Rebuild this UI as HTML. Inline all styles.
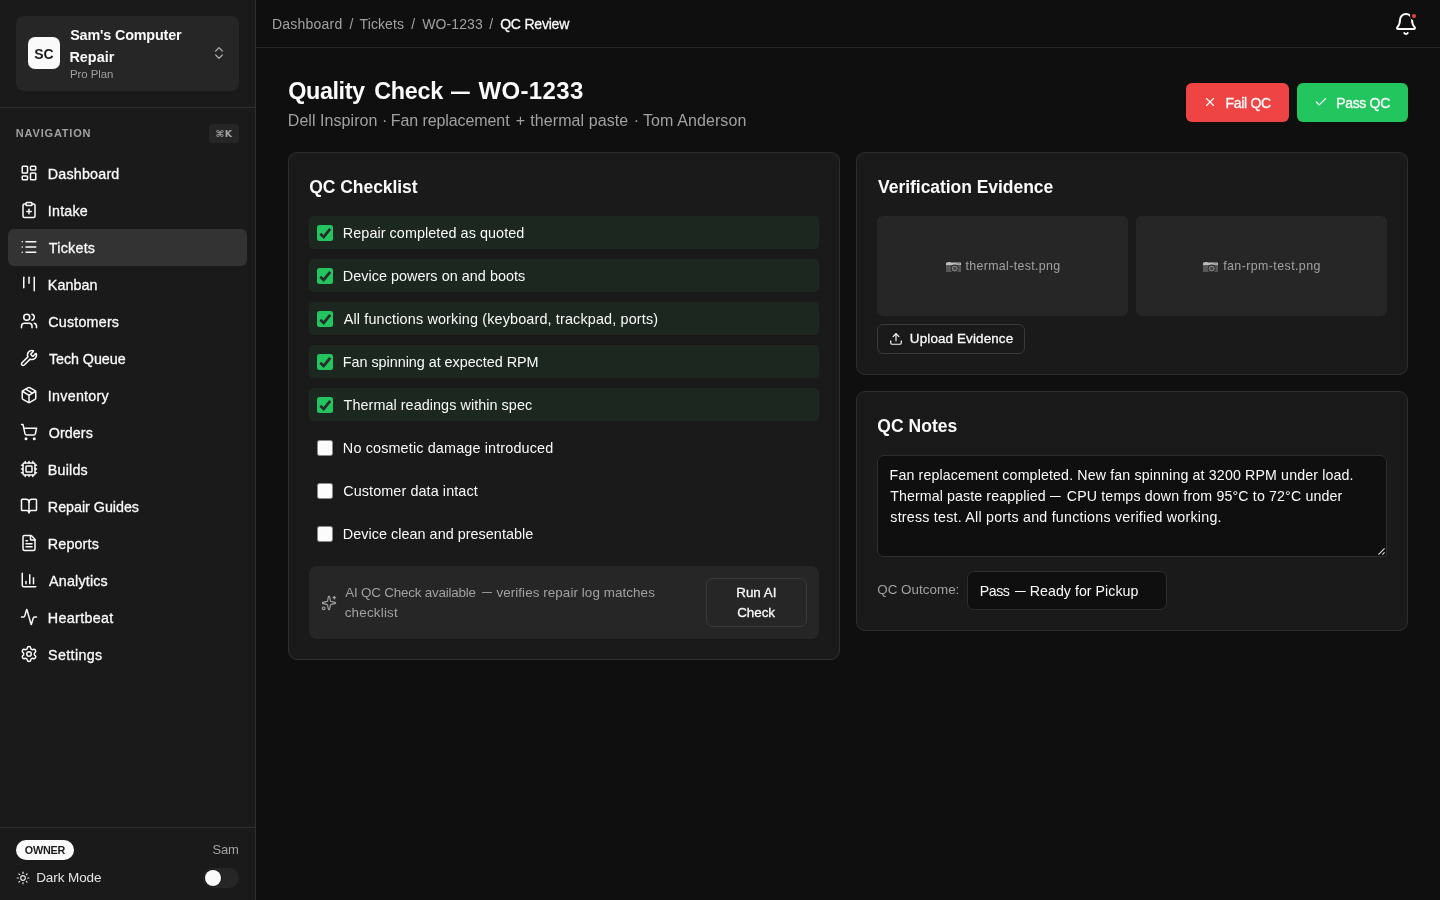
<!DOCTYPE html>
<html lang="en">
<head>
<meta charset="utf-8">
<title>Quality Check — WO-1233</title>
<style>
*{box-sizing:border-box;margin:0;padding:0}
html,body{width:1440px;height:900px;overflow:hidden;background:#0f0f0f;color:#fafafa;
  font-family:"Liberation Sans",sans-serif;font-size:14px}
svg{display:block;fill:none;stroke:currentColor;stroke-width:2;stroke-linecap:round;stroke-linejoin:round}
.abs{position:absolute}
.t{position:absolute;white-space:nowrap;line-height:1}

/* sidebar */
#sb{position:absolute;left:0;top:0;width:256px;height:900px;background:#1a1a1a;border-right:1px solid #2e2e2e}
#brand{position:absolute;left:16px;top:16px;width:223px;height:75px;background:#262626;border-radius:8px}
#logo{position:absolute;left:12px;top:21px;width:32px;height:32px;border-radius:7px;background:#fafafa;color:#1a1a1a;
  font-weight:700;font-size:14px;text-align:center;line-height:34px;letter-spacing:0}
.sep{position:absolute;left:0;width:255px;height:1px;background:#2e2e2e}
.nav{position:absolute;left:8px;width:239px;height:37px;border-radius:6px;color:#fafafa}
.nav svg{position:absolute;left:12px;top:9px;width:18px;height:18px}
.nav span{-webkit-text-stroke:0.3px currentColor;position:absolute;left:40px;top:1px;line-height:37px;font-size:14.3px;white-space:nowrap}
.nav.on{background:#333333}

/* header */
#hd{position:absolute;left:256px;top:0;width:1184px;height:48px;border-bottom:1px solid #262626;background:#0f0f0f}
.bc{position:absolute;top:0;line-height:49px;font-size:14px;color:#a1a1a1;white-space:nowrap}

/* main */
.card{position:absolute;background:#1a1a1a;border:1px solid #2e2e2e;border-radius:9px}
.ct{position:absolute;left:20px;font-size:17.5px;font-weight:700;white-space:nowrap;line-height:1;color:#fafafa}
.row{position:absolute;left:20px;width:510px;height:33px;border-radius:4.5px}
.row.ok{background:#1c2720}
.cb{position:absolute;left:8px;top:9px;width:16px;height:16px;border-radius:2.5px;background:#fbfbfb;border:1px solid #8a8a8a}
.row.ok .cb{background:#22c55e;border:0}
.cb svg{width:16px;height:16px;stroke:#2b2b2b;stroke-width:2.7;stroke-linecap:butt;stroke-linejoin:miter}
.row span{position:absolute;left:34px;top:1px;line-height:33px;font-size:14.4px;white-space:nowrap;color:#fafafa}
.btn{position:absolute;border-radius:6px;white-space:nowrap}
</style>
</head>
<body>
<div id="w" style="position:absolute;left:0;top:0;width:1440px;height:900px;will-change:transform">

<!-- SIDEBAR -->
<div id="sb">
  <div id="brand">
    <div id="logo">SC</div>
    <div id="b1" class="t" style="left:54.19px;letter-spacing:-0.182px;top:12px;font-size:14.4px;font-weight:700">Sam's Computer</div>
    <div id="b2" class="t" style="left:53.48px;letter-spacing:0.000px;top:34px;font-size:14.4px;font-weight:700">Repair</div>
    <div id="b3" class="t" style="left:53.94px;letter-spacing:-0.030px;top:53px;font-size:11.4px;color:#a1a1a1">Pro Plan</div>
    <svg class="abs" style="left:195px;top:29px;width:16px;height:16px;color:#b0b0b0;stroke-width:1.8" viewBox="0 0 24 24"><path d="m7 15 5 5 5-5"/><path d="m7 9 5-5 5 5"/></svg>
  </div>
  <div class="sep" style="top:107px"></div>
  <div id="nv" class="t" style="left:15.87px;letter-spacing:0.805px;top:128px;font-size:11px;font-weight:700;color:#a1a1a1">NAVIGATION</div>
  <div class="abs" style="left:209px;top:124px;width:30px;height:19px;border-radius:3.5px;background:#262626;color:#a1a1a1;font-size:9.5px;font-weight:700;text-align:center;line-height:19px;letter-spacing:0.5px;font-family:'DejaVu Sans','Liberation Sans',sans-serif">⌘K</div>

  <div class="nav" style="top:155px"><svg viewBox="0 0 24 24"><rect width="7" height="9" x="3" y="3" rx="1"/><rect width="7" height="5" x="14" y="3" rx="1"/><rect width="7" height="9" x="14" y="12" rx="1"/><rect width="7" height="5" x="3" y="16" rx="1"/></svg><span id="n0" style="left:39.87px;letter-spacing:0.185px;">Dashboard</span></div>
  <div class="nav" style="top:192px"><svg viewBox="0 0 24 24"><rect width="8" height="4" x="8" y="2" rx="1" ry="1"/><path d="M16 4h2a2 2 0 0 1 2 2v14a2 2 0 0 1-2 2H6a2 2 0 0 1-2-2V6a2 2 0 0 1 2-2h2"/><path d="M9 14h6"/><path d="M12 17v-6"/></svg><span id="n1" style="left:39.87px;letter-spacing:0.195px;">Intake</span></div>
  <div class="nav on" style="top:229px"><svg viewBox="0 0 24 24"><path d="M3 5h.01"/><path d="M3 12h.01"/><path d="M3 19h.01"/><path d="M8 5h13"/><path d="M8 12h13"/><path d="M8 19h13"/></svg><span id="n2" style="left:40.77px;letter-spacing:0.250px;">Tickets</span></div>
  <div class="nav" style="top:266px"><svg viewBox="0 0 24 24"><path d="M5 3v14"/><path d="M12 3v8"/><path d="M19 3v18"/></svg><span id="n3" style="left:39.87px;letter-spacing:0.059px;">Kanban</span></div>
  <div class="nav" style="top:303px"><svg viewBox="0 0 24 24"><path d="M16 21v-2a4 4 0 0 0-4-4H6a4 4 0 0 0-4 4v2"/><circle cx="9" cy="7" r="4"/><path d="M22 21v-2a4 4 0 0 0-3-3.87"/><path d="M16 3.13a4 4 0 0 1 0 7.75"/></svg><span id="n4" style="left:40.23px;letter-spacing:0.209px;">Customers</span></div>
  <div class="nav" style="top:340px"><svg viewBox="0 0 24 24"><path d="M14.7 6.3a1 1 0 0 0 0 1.4l1.6 1.6a1 1 0 0 0 1.4 0l3.106-3.105c.32-.322.863-.22.983.218a6 6 0 0 1-8.259 7.057l-7.91 7.91a1 1 0 0 1-2.999-3l7.91-7.91a6 6 0 0 1 7.057-8.259c.438.12.54.662.219.984z"/></svg><span id="n5" style="left:40.91px;letter-spacing:-0.043px;">Tech Queue</span></div>
  <div class="nav" style="top:377px"><svg viewBox="0 0 24 24"><path d="M11 21.73a2 2 0 0 0 2 0l7-4A2 2 0 0 0 21 16V8a2 2 0 0 0-1-1.73l-7-4a2 2 0 0 0-2 0l-7 4A2 2 0 0 0 3 8v8a2 2 0 0 0 1 1.73z"/><path d="M12 22V12"/><path d="m3.3 7 7.703 4.734a2 2 0 0 0 1.994 0L20.7 7"/><path d="m7.5 4.27 9 5.15"/></svg><span id="n6" style="left:39.87px;letter-spacing:0.256px;">Inventory</span></div>
  <div class="nav" style="top:414px"><svg viewBox="0 0 24 24"><circle cx="8" cy="21" r="1"/><circle cx="19" cy="21" r="1"/><path d="M2.05 2.05h2l2.66 12.42a2 2 0 0 0 2 1.58h9.78a2 2 0 0 0 1.95-1.57l1.65-7.43H5.12"/></svg><span id="n7" style="left:40.70px;letter-spacing:0.088px;">Orders</span></div>
  <div class="nav" style="top:451px"><svg viewBox="0 0 24 24"><path d="M12 20v2"/><path d="M12 2v2"/><path d="M17 20v2"/><path d="M17 2v2"/><path d="M2 12h2"/><path d="M2 17h2"/><path d="M2 7h2"/><path d="M20 12h2"/><path d="M20 17h2"/><path d="M20 7h2"/><path d="M7 20v2"/><path d="M7 2v2"/><rect x="4" y="4" width="16" height="16" rx="2"/><rect x="8" y="8" width="8" height="8" rx="1"/></svg><span id="n8" style="left:39.87px;letter-spacing:0.187px;">Builds</span></div>
  <div class="nav" style="top:488px"><svg viewBox="0 0 24 24"><path d="M12 7v14"/><path d="M3 18a1 1 0 0 1-1-1V4a1 1 0 0 1 1-1h5a4 4 0 0 1 4 4 4 4 0 0 1 4-4h5a1 1 0 0 1 1 1v13a1 1 0 0 1-1 1h-6a3 3 0 0 0-3 3 3 3 0 0 0-3-3z"/></svg><span id="n9" style="left:39.87px;letter-spacing:-0.019px;">Repair Guides</span></div>
  <div class="nav" style="top:525px"><svg viewBox="0 0 24 24"><path d="M6 22a2 2 0 0 1-2-2V4a2 2 0 0 1 2-2h8a2.4 2.4 0 0 1 1.704.706l3.588 3.588A2.4 2.4 0 0 1 20 8v12a2 2 0 0 1-2 2z"/><path d="M14 2v5a1 1 0 0 0 1 1h5"/><path d="M10 9H8"/><path d="M16 13H8"/><path d="M16 17H8"/></svg><span id="n10" style="left:39.87px;letter-spacing:0.145px;">Reports</span></div>
  <div class="nav" style="top:562px"><svg viewBox="0 0 24 24"><path d="M3 3v16a2 2 0 0 0 2 2h16"/><path d="M18 17V9"/><path d="M13 17V5"/><path d="M8 17v-3"/></svg><span id="n11" style="left:41.02px;letter-spacing:0.190px;">Analytics</span></div>
  <div class="nav" style="top:599px"><svg viewBox="0 0 24 24"><path d="M22 12h-2.48a2 2 0 0 0-1.93 1.46l-2.35 8.36a.25.25 0 0 1-.48 0L9.24 2.18a.25.25 0 0 0-.48 0l-2.35 8.36A2 2 0 0 1 4.49 12H2"/></svg><span id="n12" style="left:39.87px;letter-spacing:0.334px;">Heartbeat</span></div>
  <div class="nav" style="top:636px"><svg viewBox="0 0 24 24"><path d="M9.671 4.136a2.34 2.34 0 0 1 4.659 0 2.34 2.34 0 0 0 3.319 1.915 2.34 2.34 0 0 1 2.33 4.033 2.34 2.34 0 0 0 0 3.831 2.34 2.34 0 0 1-2.33 4.033 2.34 2.34 0 0 0-3.319 1.915 2.34 2.34 0 0 1-4.659 0 2.34 2.34 0 0 0-3.32-1.915 2.34 2.34 0 0 1-2.33-4.033 2.34 2.34 0 0 0 0-3.831A2.34 2.34 0 0 1 6.35 6.051a2.34 2.34 0 0 0 3.319-1.915"/><circle cx="12" cy="12" r="3"/></svg><span id="n13" style="left:40.03px;letter-spacing:0.357px;">Settings</span></div>

  <div class="sep" style="top:827px"></div>
  <div class="abs" style="left:16px;top:840px;width:58px;height:20px;border-radius:10px;background:#fafafa"></div>
  <div id="ow" class="t" style="left:24.80px;letter-spacing:-0.228px;top:845px;font-size:10.8px;font-weight:700;color:#1a1a1a">OWNER</div>
  <div id="sam" class="t" style="left:212.57px;letter-spacing:-0.249px;top:843px;font-size:13px;color:#a1a1a1">Sam</div>
  <svg class="abs" style="left:16px;top:871px;width:14px;height:14px;color:#e5e5e5;stroke-width:2" viewBox="0 0 24 24"><circle cx="12" cy="12" r="4"/><path d="M12 2v2"/><path d="M12 20v2"/><path d="m4.93 4.93 1.41 1.41"/><path d="m17.66 17.66 1.41 1.41"/><path d="M2 12h2"/><path d="M20 12h2"/><path d="m6.34 17.66-1.41 1.41"/><path d="m19.07 4.93-1.41 1.41"/></svg>
  <div id="dm" class="t" style="left:36.19px;letter-spacing:-0.088px;top:871px;font-size:13.5px;color:#e5e5e5">Dark Mode</div>
  <div class="abs" style="left:203px;top:868px;width:36px;height:20px;border-radius:10px;background:#262626"><div class="abs" style="left:2px;top:2px;width:16px;height:16px;border-radius:8px;background:#fafafa;box-shadow:0 0 0 1px rgba(0,0,0,.35)"></div></div>
</div>

<!-- HEADER -->
<div id="hd">
  <span id="c0" class="bc" style="left:15.91px;letter-spacing:0.221px;">Dashboard</span>
  <span id="c1" class="bc" style="left:93.38px;letter-spacing:0.000px;">/</span>
  <span id="c2" class="bc" style="left:103.60px;letter-spacing:0.084px;">Tickets</span>
  <span id="c3" class="bc" style="left:155.28px;letter-spacing:0.000px;">/</span>
  <span id="c4" class="bc" style="left:166.32px;letter-spacing:0.094px;">WO-1233</span>
  <span id="c5" class="bc" style="left:233.22px;letter-spacing:0.000px;">/</span>
  <span id="c6" class="bc" style="left:244.15px;letter-spacing:-0.204px;-webkit-text-stroke:0.3px currentColor;color:#fafafa">QC Review</span>
  <svg class="abs" style="left:1138px;top:12px;width:24px;height:24px;color:#fafafa;stroke-width:2" viewBox="0 0 24 24"><path d="M10.268 21a2 2 0 0 0 3.464 0"/><path d="M3.262 15.326A1 1 0 0 0 4 17h16a1 1 0 0 0 .74-1.673C19.41 13.956 18 12.499 18 8A6 6 0 0 0 6 8c0 4.499-1.411 5.956-2.738 7.326"/></svg>
  <div class="abs" style="left:1154px;top:12px;width:8px;height:8px;border-radius:50%;background:#ef4444;border:2px solid #0f0f0f"></div>
</div>

<!-- MAIN -->
<div id="main">
  <div id="t1" class="t" style="left:288.22px;letter-spacing:-0.411px;top:79.5px;font-size:23.4px;font-weight:700;color:#fafafa">Quality</div>
  <div id="t2" class="t" style="left:374.20px;letter-spacing:-0.266px;top:79.5px;font-size:23.4px;font-weight:700;color:#fafafa">Check</div>
  <div id="t3" class="t" style="left:451.01px;letter-spacing:0.000px;top:79px;font-size:24px;transform:scaleX(0.78);transform-origin:0 0;font-weight:700;color:#fafafa">—</div>
  <div id="t4" class="t" style="left:478.45px;letter-spacing:0.370px;top:79px;font-size:24px;font-weight:700;color:#fafafa">WO-1233</div>
  <div id="s1" class="t" style="left:287.79px;letter-spacing:0.060px;top:113px;font-size:16px;color:#a1a1a1">Dell Inspiron</div>
  <div id="s2" class="t" style="left:382.00px;letter-spacing:0.000px;top:113px;font-size:16px;color:#a1a1a1">·</div>
  <div id="s3" class="t" style="left:390.79px;letter-spacing:-0.087px;top:113px;font-size:16px;color:#a1a1a1">Fan replacement</div>
  <div id="s4" class="t" style="left:515.87px;letter-spacing:0.000px;top:113px;font-size:16px;color:#a1a1a1">+</div>
  <div id="s5" class="t" style="left:530.24px;letter-spacing:0.088px;top:113px;font-size:16px;color:#a1a1a1">thermal paste</div>
  <div id="s6" class="t" style="left:633.72px;letter-spacing:0.000px;top:113px;font-size:16px;color:#a1a1a1">·</div>
  <div id="s7" class="t" style="left:643.02px;letter-spacing:0.091px;top:113px;font-size:16px;color:#a1a1a1">Tom Anderson</div>

  <div class="btn" style="left:1186px;top:83px;width:103px;height:39px;background:#ef4444;color:#fafafa">
    <svg class="abs" style="left:17px;top:12px;width:14px;height:14px;stroke-width:2" viewBox="0 0 24 24"><path d="M18 6 6 18"/><path d="m6 6 12 12"/></svg>
    <span id="fq" class="t" style="left:39.62px;letter-spacing:-0.325px;-webkit-text-stroke:0.3px currentColor;top:1px;line-height:39px;font-size:14px">Fail QC</span>
  </div>
  <div class="btn" style="left:1297px;top:83px;width:111px;height:39px;background:#22c55e;color:#fafafa">
    <svg class="abs" style="left:17px;top:12px;width:14px;height:14px;stroke-width:2" viewBox="0 0 24 24"><path d="M20 6 9 17l-5-5"/></svg>
    <span id="pq" class="t" style="left:39.20px;letter-spacing:-0.321px;-webkit-text-stroke:0.3px currentColor;top:1px;line-height:39px;font-size:14px">Pass QC</span>
  </div>

  <!-- QC Checklist -->
  <div class="card" style="left:288px;top:152px;width:552px;height:508px">
    <div id="k0" class="ct" style="left:20.31px;letter-spacing:-0.055px;top:26px">QC Checklist</div>
    <div class="row ok" style="top:63px"><div class="cb"><svg viewBox="0 0 16 16"><path d="M3.3 8.7 6.7 11.9 13.2 3.9"/></svg></div><span id="r0" style="left:33.80px;letter-spacing:0.060px;">Repair completed as quoted</span></div>
    <div class="row ok" style="top:106px"><div class="cb"><svg viewBox="0 0 16 16"><path d="M3.3 8.7 6.7 11.9 13.2 3.9"/></svg></div><span id="r1" style="left:33.80px;letter-spacing:0.033px;">Device powers on and boots</span></div>
    <div class="row ok" style="top:149px"><div class="cb"><svg viewBox="0 0 16 16"><path d="M3.3 8.7 6.7 11.9 13.2 3.9"/></svg></div><span id="r2" style="left:34.73px;letter-spacing:0.151px;">All functions working (keyboard, trackpad, ports)</span></div>
    <div class="row ok" style="top:192px"><div class="cb"><svg viewBox="0 0 16 16"><path d="M3.3 8.7 6.7 11.9 13.2 3.9"/></svg></div><span id="r3" style="left:33.80px;letter-spacing:-0.039px;">Fan spinning at expected RPM</span></div>
    <div class="row ok" style="top:235px"><div class="cb"><svg viewBox="0 0 16 16"><path d="M3.3 8.7 6.7 11.9 13.2 3.9"/></svg></div><span id="r4" style="left:34.60px;letter-spacing:0.051px;">Thermal readings within spec</span></div>
    <div class="row" style="top:278px"><div class="cb"></div><span id="r5" style="left:33.85px;letter-spacing:0.143px;">No cosmetic damage introduced</span></div>
    <div class="row" style="top:321px"><div class="cb"></div><span id="r6" style="left:34.23px;letter-spacing:0.089px;">Customer data intact</span></div>
    <div class="row" style="top:364px"><div class="cb"></div><span id="r7" style="left:33.85px;letter-spacing:0.029px;">Device clean and presentable</span></div>

    <div class="abs" style="left:20px;top:413px;width:510px;height:73px;border-radius:8px;background:#262626">
      <svg class="abs" style="left:12px;top:29px;width:16px;height:16px;color:#a1a1a1;stroke-width:1.7" viewBox="0 0 24 24"><path d="M11.017 2.814a1 1 0 0 1 1.966 0l1.051 5.558a2 2 0 0 0 1.594 1.594l5.558 1.051a1 1 0 0 1 0 1.966l-5.558 1.051a2 2 0 0 0-1.594 1.594l-1.051 5.558a1 1 0 0 1-1.966 0l-1.051-5.558a2 2 0 0 0-1.594-1.594l-5.558-1.051a1 1 0 0 1 0-1.966l5.558-1.051a2 2 0 0 0 1.594-1.594z"/><path d="M20 2v4"/><path d="M22 4h-4"/><circle cx="4" cy="20" r="2"/></svg>
      <div id="a1a" class="t" style="left:36.35px;letter-spacing:-0.202px;top:20px;font-size:13.4px;color:#a1a1a1">AI QC Check available</div>
      <div id="a1b" class="t" style="left:172.56px;letter-spacing:0.000px;top:19.3px;font-size:13.4px;color:#a1a1a1;transform:scaleX(0.75);transform-origin:0 0;">—</div>
      <div id="a1c" class="t" style="left:187.39px;letter-spacing:0.084px;top:20px;font-size:13.4px;color:#a1a1a1">verifies repair log matches</div>
      <div id="a2" class="t" style="left:35.63px;letter-spacing:0.223px;top:40px;font-size:13.4px;color:#a1a1a1">checklist</div>
      <div class="abs" style="left:397px;top:12px;width:101px;height:49px;border:1px solid #3a3a3a;border-radius:7px;background:#262626"></div>
      <div id="a3" class="t" style="left:427.32px;letter-spacing:-0.032px;-webkit-text-stroke:0.3px currentColor;top:20px;font-size:13.4px;color:#fafafa">Run AI</div>
      <div id="a4" class="t" style="left:428.16px;letter-spacing:-0.017px;-webkit-text-stroke:0.3px currentColor;top:40px;font-size:13.4px;color:#fafafa">Check</div>
    </div>
  </div>

  <!-- Verification Evidence -->
  <div class="card" style="left:856px;top:152px;width:552px;height:223px">
    <div id="k1" class="ct" style="left:21.12px;letter-spacing:-0.047px;top:26px">Verification Evidence</div>
    <div class="abs" style="left:20px;top:63px;width:251px;height:100px;border-radius:6px;background:#262626"></div>
    <div class="abs" style="left:279px;top:63px;width:251px;height:100px;border-radius:6px;background:#262626"></div>
    <svg class="abs" style="left:88.9px;top:108.7px;width:15px;height:10.5px;stroke:none" viewBox="0 0 15 10.5"><rect x="0" y="0.6" width="15" height="3" rx="0.6" fill="#bdbdbd"/><path d="M1.2 0.8 2.4 0h1.6l1 .8z" fill="#cfcfcf"/><rect x="0" y="3.3" width="15" height="7.2" rx="0.5" fill="#575757"/><rect x="10.6" y="1.1" width="3.4" height="1.5" fill="#8f8f8f"/><circle cx="8.7" cy="6.5" r="3.9" fill="#242424"/><circle cx="8.7" cy="6.5" r="3" fill="#7a7a7a"/><circle cx="8.7" cy="6.5" r="1.7" fill="#454545"/></svg>
    <svg class="abs" style="left:346.1px;top:108.7px;width:15px;height:10.5px;stroke:none" viewBox="0 0 15 10.5"><rect x="0" y="0.6" width="15" height="3" rx="0.6" fill="#bdbdbd"/><path d="M1.2 0.8 2.4 0h1.6l1 .8z" fill="#cfcfcf"/><rect x="0" y="3.3" width="15" height="7.2" rx="0.5" fill="#575757"/><rect x="10.6" y="1.1" width="3.4" height="1.5" fill="#8f8f8f"/><circle cx="8.7" cy="6.5" r="3.9" fill="#242424"/><circle cx="8.7" cy="6.5" r="3" fill="#7a7a7a"/><circle cx="8.7" cy="6.5" r="1.7" fill="#454545"/></svg>
    <div id="e1" class="t" style="left:107.85px;letter-spacing:0.335px;top:107px;font-size:12.4px;color:#a1a1a1"><span style="font-size:0">📷 </span>thermal-test.png</div>
    <div id="e2" class="t" style="left:365.36px;letter-spacing:0.417px;top:107px;font-size:12.4px;color:#a1a1a1"><span style="font-size:0">📷 </span>fan-rpm-test.png</div>
    <div class="abs" style="left:20px;top:171px;width:148px;height:30px;border:1px solid #3a3a3a;border-radius:6px;background:#1a1a1a">
      <svg class="abs" style="left:11px;top:7px;width:14px;height:14px;color:#fafafa;stroke-width:2" viewBox="0 0 24 24"><path d="M21 15v4a2 2 0 0 1-2 2H5a2 2 0 0 1-2-2v-4"/><polyline points="17 8 12 3 7 8"/><line x1="12" x2="12" y1="3" y2="15"/></svg>
      <span id="ue" class="t" style="left:31.87px;letter-spacing:0.143px;-webkit-text-stroke:0.3px currentColor;top:0;line-height:28px;font-size:13.4px;color:#fafafa">Upload Evidence</span>
    </div>
  </div>

  <!-- QC Notes -->
  <div class="card" style="left:856px;top:391px;width:552px;height:240px">
    <div id="k2" class="ct" style="left:20.31px;letter-spacing:0.035px;top:26px">QC Notes</div>
    <div class="abs" style="left:20px;top:63px;width:510px;height:102px;border:1px solid #2e2e2e;border-radius:7px 7px 2px 7px;background:#0f0f0f">
      <div id="q1" class="t" style="left:11.60px;letter-spacing:0.147px;top:12px;font-size:14.2px;color:#fafafa">Fan replacement completed. New fan spinning at 3200 RPM under load.</div>
      <div id="q2a" class="t" style="left:12.16px;letter-spacing:0.113px;top:33px;font-size:14.2px;color:#fafafa">Thermal paste reapplied</div>
      <div id="q2b" class="t" style="left:172.33px;letter-spacing:0.000px;top:32.3px;font-size:14.2px;color:#fafafa;transform:scaleX(0.75);transform-origin:0 0;">—</div>
      <div id="q2c" class="t" style="left:188.76px;letter-spacing:0.151px;top:33px;font-size:14.2px;color:#fafafa">CPU temps down from 95°C to 72°C under</div>
      <div id="q3" class="t" style="left:12.29px;letter-spacing:0.253px;top:54px;font-size:14.2px;color:#fafafa">stress test. All ports and functions verified working.</div>
      <svg class="abs" style="right:1px;bottom:1px;width:8px;height:8px;color:#d8d8d8;stroke-width:1.15;stroke-linecap:butt" viewBox="0 0 8 8"><path d="M7.6 1.4 1.4 7.6"/><path d="M7.6 5.4 5.4 7.6"/></svg>
    </div>
    <div id="qo" class="t" style="left:20.25px;letter-spacing:0.021px;top:191px;font-size:13.4px;color:#a1a1a1">QC Outcome:</div>
    <div class="abs" style="left:110px;top:179px;width:200px;height:39px;border:1px solid #2e2e2e;border-radius:7px;background:#0f0f0f">
      <span id="psa" class="t" style="left:11.84px;letter-spacing:-0.491px;top:1px;line-height:37px;font-size:14.2px;color:#fafafa">Pass</span>
      <span id="psb" class="t" style="left:46.75px;letter-spacing:0.000px;top:0.3px;line-height:37px;font-size:14.2px;color:#fafafa;transform:scaleX(0.75);transform-origin:0 0;">—</span>
      <span id="psc" class="t" style="left:61.84px;letter-spacing:0.031px;top:1px;line-height:37px;font-size:14.2px;color:#fafafa">Ready for Pickup</span>
    </div>
  </div>
</div>

</div>
</body>
</html>
